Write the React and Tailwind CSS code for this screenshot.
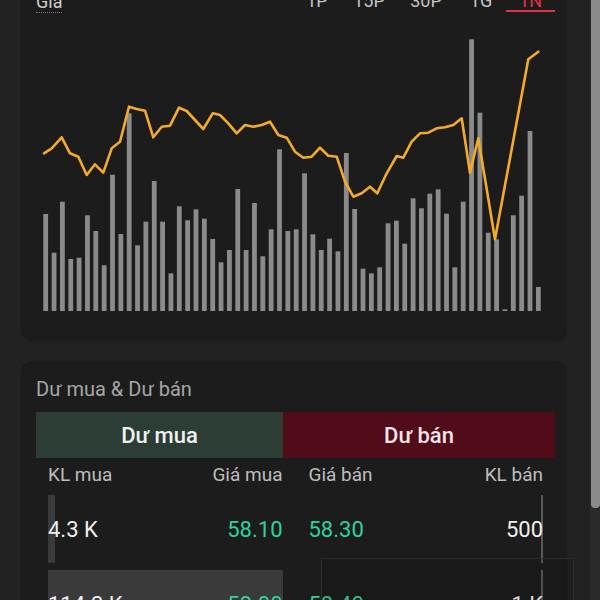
import React from 'react';

// bar tops in page coordinates, baseline at y=311
const BAR_TOPS = [
  214, 252.7, 201.7, 259, 257.7, 215.3, 231, 265.3, 174.7, 234,
  113.3, 245.3, 221.7, 181, 221.7, 273.3, 206.3, 220.3, 209.3, 218.7,
  239, 262.3, 250, 189, 250, 203, 256.3, 229.3, 149.3, 231,
  229.3, 173.3, 234.3, 250, 238.7, 251.3, 153, 209, 268.7, 273.3,
  267.3, 223.3, 220.7, 243.7, 198.3, 208.3, 193.7, 189.3, 213.7, 267.3,
  201.7, 39.3, 112.7, 232.7, 239.3, 309.3, 215.3, 195.7, 131, 287,
];

const PRICE_LINE = [
  [44, 153.3], [51.7, 148.3], [61.7, 137.3], [70, 153.3], [78.3, 156.7], [86.7, 175],
  [95, 164.3], [103.3, 172.7], [111.7, 148.3], [120, 141.7], [129, 106.7], [136.7, 109],
  [145, 110.7], [153.3, 137.3], [161.7, 126.7], [170, 125.7], [179, 107.7], [186.7, 111],
  [195, 120], [203.3, 129], [212.7, 113.3], [220, 115], [228.3, 123.3], [236.7, 133.3],
  [245, 125], [253.3, 126.7], [261.7, 125], [270, 121.7], [278.3, 135], [286.7, 137.7],
  [295, 151.7], [303.3, 157.7], [311.7, 156.7], [320, 147.7], [328.3, 155.7], [336.7, 156.7],
  [345, 181.7], [353.3, 196.7], [361.7, 193.3], [370, 186.7], [377.3, 193.3], [386.7, 173.3],
  [396.7, 156], [403.3, 157.7], [411.7, 141.7], [420, 133.3], [428.3, 132.7], [436.7, 128.3],
  [445, 127.3], [453.3, 125], [461.7, 118.3], [470, 172.7], [478.3, 138.3], [495, 239.3],
  [528.3, 59.3], [538.3, 51.7],
];

const RANGES = [
  { id: '1P', w: 'w-[50px]' },
  { id: '15P', w: 'w-[54px]' },
  { id: '30P', w: 'w-[60px]' },
  { id: '1G', w: 'w-[50px]' },
  { id: '1N', w: 'w-[49px]' },
];

const ORDERS = [
  { buyVol: '4.3 K', buyW: 7, bid: '58.10', ask: '58.30', sellVol: '500', sellW: 2 },
  { buyVol: '114.2 K', buyW: 235, bid: '58.00', ask: '58.40', sellVol: '1 K', sellW: 2 },
];

function PriceChart() {
  const pts = PRICE_LINE.map(p => p.join(',')).join(' ');
  return (
    <svg width="544" height="300" viewBox="22 20 544 300" className="mt-[6px] block">
      {BAR_TOPS.map((top, i) => (
        <rect key={i} x={43.3 + i * 8.35} y={top} width="4.8" height={311 - top} fill="#8b8b8b" />
      ))}
      <polyline points={pts} fill="none" stroke="#f4ab2c" strokeWidth="2.6" strokeLinejoin="round" strokeLinecap="round" />
    </svg>
  );
}

export default function App() {
  const active = '1N';

  return (
    <div className="relative flex h-[600px] w-[600px] overflow-hidden bg-[#222222] font-['Roboto','Liberation_Sans',sans-serif]">
      <div className="w-[590px] flex-none">
        {/* chart card */}
        <div className="-mt-[18px] ml-[22px] mr-[24px] rounded-[10px] bg-[#1c1c1c] pt-[10px] pb-[20px] shadow-[0_0_2px_rgba(0,0,0,0.7)]">
          <div className="flex h-[22px] items-start justify-between pl-[14px] pr-[11px]">
            <span className="border-b border-dotted border-[#7a7a7a] text-[18px] leading-[20px] text-[#cfcfcf]">Giá</span>
            <div className="flex">
              {RANGES.map(r => (
                <div key={r.id} className={`${r.w} flex justify-center`}>
                  <span
                    className={`text-[18px] leading-[18px] ${
                      r.id === active ? 'w-full border-b-2 border-[#e2304c] text-center text-[#e2304c]' : 'text-[#c4c4c4]'
                    }`}
                  >
                    {r.id}
                  </span>
                </div>
              ))}
            </div>
          </div>
          <PriceChart />
        </div>

        {/* order book card */}
        <div className="mt-[22px] ml-[22px] mr-[24px] rounded-[10px] bg-[#1c1c1c] pl-[14px] pr-[11px] pt-[15px] pb-10 shadow-[0_0_2px_rgba(0,0,0,0.7)]">
          <h3 className="text-[20px] leading-6 text-[#a6a6a6]">Dư mua &amp; Dư bán</h3>
          <div className="mt-[11px] flex h-[46px] text-[22px] font-medium">
            <div className="flex w-[247px] items-center justify-center bg-[#2b3d34] text-[#f1f1f1]">Dư mua</div>
            <div className="flex flex-1 items-center justify-center bg-[#520b19] text-[#f7e5ea]">Dư bán</div>
          </div>

          <div className="mt-[5px] grid grid-cols-2 gap-x-[26px] px-[12px] text-[19px] leading-6 text-[#bdbdbd]">
            <div className="flex justify-between"><span>KL mua</span><span>Giá mua</span></div>
            <div className="flex justify-between"><span>Giá bán</span><span>KL bán</span></div>
          </div>

          <div className="mt-[8px] flex flex-col gap-[7px] px-[12px]">
            {ORDERS.map(o => (
              <div key={o.bid} className="grid h-[68px] grid-cols-2 gap-x-[26px] text-[22px]">
                <div className="relative flex items-center justify-between">
                  <div className="absolute inset-y-0 left-0 bg-[#3a3a3a]" style={{ width: o.buyW }} />
                  <span className="relative text-[#f0f0f0]">{o.buyVol}</span>
                  <span className="relative text-[#2fd39a]">{o.bid}</span>
                </div>
                <div className="relative flex items-center justify-between">
                  <div className="absolute inset-y-0 right-0 bg-[#5a5a5a]" style={{ width: o.sellW }} />
                  <span className="relative text-[#2fd39a]">{o.ask}</span>
                  <span className="relative text-[#f0f0f0]">{o.sellVol}</span>
                </div>
              </div>
            ))}
          </div>
        </div>
      </div>

      {/* scrollbar */}
      <div className="w-[10px] flex-none bg-[#2a2a2a]">
        <div className="ml-[1px] h-[508px] rounded-b-[4px] bg-[#8a8a8a]" />
      </div>

      {/* floating panel peeking in at the bottom */}
      <div className="pointer-events-none absolute left-[321px] top-[558px] h-[80px] w-[253px] border border-[#2e2e2e] bg-black/10" />
    </div>
  );
}
